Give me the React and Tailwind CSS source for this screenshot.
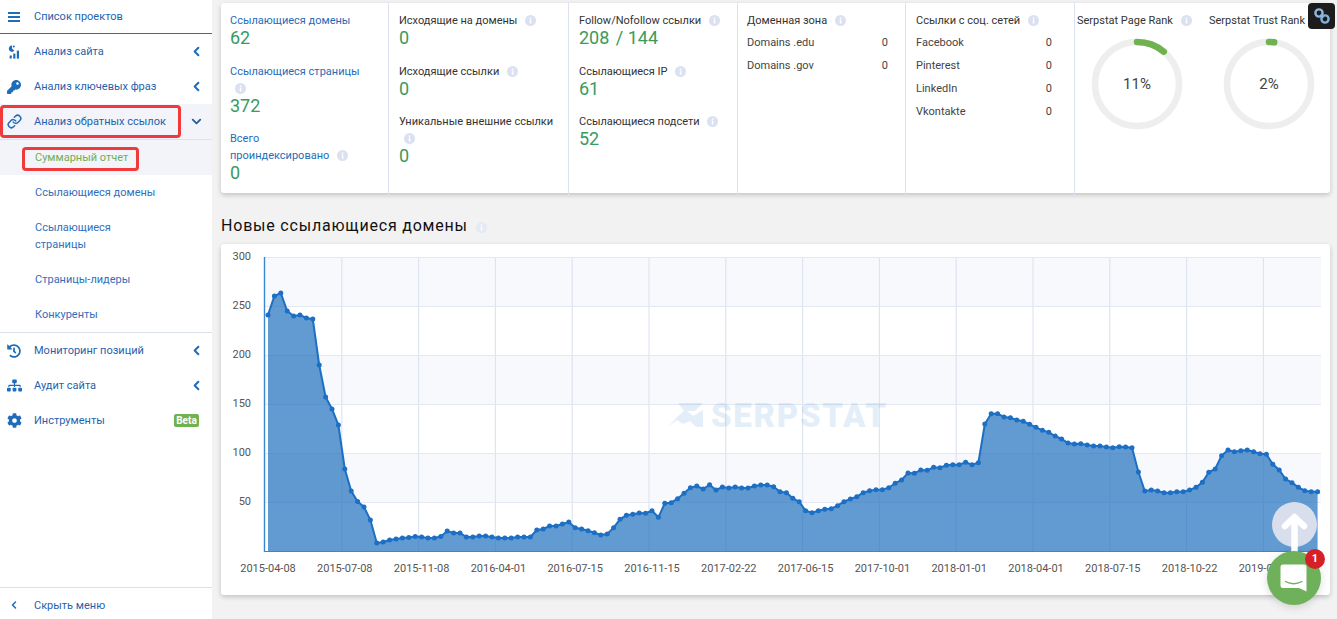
import React from "react";
import { ChevronLeft, ChevronDown, Link as LinkIcon } from "lucide-react";
import { FaKey, FaHistory, FaSitemap, FaCog } from "react-icons/fa";

const ys = [315,296,293,311,316,315,318,319,365,397,409,425,469,491,501.5,507,520,543,542,540,539,538,537.5,536.5,537,538,538,536.5,531,533,533,537,537,536,536,537,538,538,538,537,537,537,530,529,526,526,524,522,527.7,529,530.7,532.7,535,534,527.7,519.3,515.3,514.3,513,513.3,510.7,517.3,503.3,502.7,498.7,493.3,487.7,486,489,484.7,490,487,488,487,488,488,486,485,485,486.7,491.7,492.7,498.3,501.7,510.7,512.7,510.7,509.3,508.7,505.7,501.7,499,496.7,492.7,490.7,489.7,489.7,487.7,483.3,480,473,473.3,470,470.3,467.3,467.7,465.3,464.7,464.7,462.3,464.7,462.7,424,413.7,413.7,417,417.7,420,421.3,424.3,427.3,430.3,432.3,436,439,443,444,443.7,445,446,446,447,447.7,446.7,447,447.7,472,491,490,491,492.7,492.7,491.7,491.7,490,487.3,482.3,472.3,469,455.7,450,451.7,450.7,450,451.7,453.7,454.3,464.3,470,479,482.7,487.3,490.7,491.7,491.7];
const pts = ys.map((y, i) => [268 + i * 6.4, y]);
const line = pts.map((p) => p.join(",")).join(" ");
const area = `268,551 ${line} ${pts[pts.length - 1][0]},551`;
const xLabels = ["2015-04-08","2015-07-08","2015-11-08","2016-04-01","2016-07-15","2016-11-15","2017-02-22","2017-06-15","2017-10-01","2018-01-01","2018-04-01","2018-07-15","2018-10-22","2019-02-15"];

function Info({ light }) {
  return (
    <svg viewBox="0 0 11 11" className="inline-block w-[11px] h-[11px] ml-[5px] align-[-2px]">
      <circle cx="5.5" cy="5.5" r="5.5" fill={light ? "#e6e9f4" : "#dbe1f0"} />
      <rect x="4.8" y="4.6" width="1.5" height="4" fill="#fff" />
      <rect x="4.8" y="2.4" width="1.5" height="1.5" fill="#fff" />
    </svg>
  );
}

function SiteIcon() {
  return (
    <svg viewBox="0 0 14 14" className="w-[14px] h-[14px]" fill="#1f6cb8">
      <path d="M5 0.5a3.2 3.2 0 1 0 2.4 5.3L5 3.6z" />
      <rect x="5.8" y="0.4" width="2" height="2" rx="1" />
      <rect x="2.6" y="10.5" width="2.2" height="3" />
      <rect x="6.2" y="8.6" width="2.2" height="5" />
      <rect x="9.8" y="5.6" width="2.2" height="8" />
    </svg>
  );
}

function NavRow({ icon, label, right, className = "", children }) {
  return (
    <div className={`relative flex items-center h-[35px] pl-[6px] pr-[10px] shrink-0 ${className}`}>
      <span className="w-[16px] flex justify-center mr-[12px] text-[#1f6cb8]">{icon}</span>
      <span className="text-[11px] leading-[17px] text-[#1f62ad] whitespace-nowrap">{label}</span>
      <span className="ml-auto flex items-center">{right}</span>
      {children}
    </div>
  );
}

const Back = () => <ChevronLeft size={15} strokeWidth={3.2} className="text-[#1f6cb8] -mr-[2px]" />;

function SubRow({ children, active }) {
  return (
    <div className={`relative flex items-center min-h-[35px] py-[9px] pl-[35px] pr-[50px] shrink-0 text-[11px] leading-[17px] ${active ? "bg-[#f3f4f9] text-[#6fae55]" : "text-[#2f6fbd]"}`}>
      <span>{children}</span>
      {active && <span className="absolute left-[22px] top-[7px] w-[117px] h-[24px] border-[3px] border-[#f03a3a] rounded-[4px]" />}
    </div>
  );
}

function Stat({ label, value, blue, info, narrow, children }) {
  return (
    <div className="mb-[16px] first:mb-[17px]">
      <div className={`text-[11px] leading-[17px] ${blue ? "text-[#1f6cb8]" : "text-[#333]"} ${narrow ? "max-w-[130px]" : ""}`}>
        {label}
        {info && <> <Info /></>}
      </div>
      <div className="text-[18px] leading-[17px] text-[#3a9a5c]">{value ?? children}</div>
    </div>
  );
}

function Col({ children, className = "" }) {
  return <div className={`border-r border-[#dde2f0] pt-[9px] ${className}`}>{children}</div>;
}

function KV({ k, v }) {
  return (
    <div className="flex justify-between text-[11px] leading-[17px] h-[23px] text-[#444]">
      <span>{k}</span>
      <span>{v}</span>
    </div>
  );
}

function Ring({ pct, title, info }) {
  const c = 2 * Math.PI * 42;
  return (
    <div className="w-[120px]">
      <div className="text-[11px] leading-[17px] text-[#333] whitespace-nowrap">
        {title}
        {info && <> <Info /></>}
      </div>
      <div className="relative w-[92px] h-[92px] mx-auto mt-[9px]">
        <svg viewBox="0 0 92 92" className="w-[92px] h-[92px]">
          <circle cx="46" cy="46" r="42" fill="none" stroke="#eeeeee" strokeWidth="6.5" />
          <circle cx="46" cy="46" r="42" fill="none" stroke="#6fb24f" strokeWidth="6.5" strokeLinecap="round" strokeDasharray={`${(c * pct) / 100} ${c}`} transform="rotate(-90 46 46)" />
        </svg>
        <div className="absolute inset-0 flex items-center justify-center text-[15px] text-[#444]">{pct}%</div>
      </div>
    </div>
  );
}

function Chart() {
  const vx = Array.from({ length: 13 }, (_, i) => 341.8 + i * 76.8);
  const hy = [257.5, 306.5, 355.5, 404.5, 453.5, 502.5];
  return (
    <svg viewBox="221 244 1109 351" className="w-[1109px] h-[351px] block">
      <rect x="265" y="257.5" width="1056" height="49" fill="#f8f9fc" />
      <rect x="265" y="355.5" width="1056" height="49" fill="#f8f9fc" />
      <rect x="265" y="453.5" width="1056" height="49" fill="#f8f9fc" />
      {vx.map((x) => <line key={x} x1={x} x2={x} y1="257" y2="551" stroke="#dfe4f1" strokeWidth="1.2" />)}
      {hy.map((y) => <line key={y} x1="265" x2="1321" y1={y} y2={y} stroke="#e4e8f3" strokeWidth="1.2" />)}
      <g fill="#3184cf" opacity="0.13">
        <polygon points="678,403 703,403 695,411 687,411 693,416 703,410 703,427 696,427 690,421 683,424 677,420 668,427 668,427 678,416 684,411" />
        <text x="711" y="427" fontFamily="Roboto, sans-serif" fontWeight="900" fontSize="33" letterSpacing="1.7">SERPSTAT</text>
      </g>
      <polygon points={area} fill="#1e70bd" fillOpacity="0.7" />
      <polyline points={line} fill="none" stroke="#1c6fc4" strokeWidth="2" />
      {pts.map(([x, y]) => <circle key={x} cx={x} cy={y} r="2.5" fill="#1c6fc4" />)}
      <line x1="264.5" x2="264.5" y1="257" y2="552" stroke="#3a87d0" strokeWidth="1.4" />
      <line x1="264" x2="1321" y1="551.5" y2="551.5" stroke="#3a87d0" strokeWidth="1.2" />
      {[300, 250, 200, 150, 100, 50].map((v, i) => (
        <text key={v} x="251" y={260 + i * 49} textAnchor="end" fontFamily="Roboto, sans-serif" fontSize="11" fill="#555">{v}</text>
      ))}
      {xLabels.map((t, i) => (
        <text key={t} x={268 + i * 76.8} y="572" textAnchor="middle" fontFamily="Roboto, sans-serif" fontSize="11" fill="#555">{t}</text>
      ))}
    </svg>
  );
}

export default function App() {
  return (
    <div className="relative flex w-full h-screen overflow-hidden bg-[#f2f2f2] font-['Roboto',sans-serif]">
      <aside className="w-[212px] shrink-0 h-full bg-white flex flex-col">
        <div className="flex items-center h-[34px] border-b border-[#2a6db0] pl-[6px] shrink-0">
          <span className="w-[16px] ml-[2px] mr-[10px] flex flex-col gap-[2px]">
            <span className="block h-[2px] w-[12px] bg-[#1f6cb8]" />
            <span className="block h-[2px] w-[12px] bg-[#1f6cb8]" />
            <span className="block h-[2px] w-[12px] bg-[#1f6cb8]" />
          </span>
          <span className="text-[11px] leading-[17px] text-[#1f62ad]">Список проектов</span>
        </div>
        <NavRow icon={<SiteIcon />} label="Анализ сайта" right={<Back />} />
        <NavRow icon={<FaKey size={14} />} label="Анализ ключевых фраз" right={<Back />} />
        <NavRow
          icon={<LinkIcon size={15} strokeWidth={2.4} />}
          label="Анализ обратных ссылок"
          right={<ChevronDown size={15} strokeWidth={3} className="text-[#2a5e9c] -mr-[2px]" />}
          className="bg-[#f3f4f9]"
        >
          <span className="absolute left-0 top-[1px] w-[181px] h-[33px] border-[3px] border-[#f03a3a] rounded-[4px]" />
        </NavRow>
        <div className="h-px bg-[#dde1ef] shrink-0" />
        <SubRow active>Суммарный отчет</SubRow>
        <SubRow>Ссылающиеся домены</SubRow>
        <SubRow>Ссылающиеся страницы</SubRow>
        <SubRow>Страницы-лидеры</SubRow>
        <SubRow>Конкуренты</SubRow>
        <div className="h-px bg-[#dde1ef] shrink-0" />
        <NavRow icon={<FaHistory size={14} />} label="Мониторинг позиций" right={<Back />} />
        <NavRow icon={<FaSitemap size={15} />} label="Аудит сайта" right={<Back />} />
        <NavRow
          icon={<FaCog size={15} />}
          label="Инструменты"
          right={<span className="w-[25px] h-[13px] bg-[#6fb24f] rounded-[2px] text-white text-[10px] leading-[13px] font-bold text-center mr-[3px]">Beta</span>}
        />
        <div className="mt-auto h-[32px] border-t border-[#dde1ef] pt-[3px] flex items-center pl-[6px] shrink-0">
          <span className="w-[16px] flex justify-center mr-[12px]">
            <ChevronLeft size={12} strokeWidth={3} className="text-[#1f6cb8]" />
          </span>
          <span className="text-[11px] leading-[17px] text-[#1f62ad]">Скрыть меню</span>
        </div>
      </aside>

      <main className="w-[1109px] ml-[9px] pt-[3px] shrink-0">
        <section className="grid grid-cols-[168px_180px_169px_168px_169px_1fr] h-[190px] bg-white rounded-[3px] shadow-[0_2px_5px_rgba(0,0,0,0.2)]">
          <Col className="pl-[9px]">
            <Stat blue label="Ссылающиеся домены" value="62" />
            <Stat blue info narrow label="Ссылающиеся страницы" value="372" />
            <Stat blue info narrow label="Всего проиндексировано" value="0" />
          </Col>
          <Col className="px-[10px]">
            <Stat info label="Исходящие на домены" value="0" />
            <Stat info label="Исходящие ссылки" value="0" />
            <Stat info label="Уникальные внешние ссылки" value="0" />
          </Col>
          <Col className="px-[10px]">
            <Stat info label="Follow/Nofollow ссылки">208 <span className="ml-[2px]">/ 144</span></Stat>
            <Stat info label="Ссылающиеся IP" value="61" />
            <Stat info label="Ссылающиеся подсети" value="52" />
          </Col>
          <Col className="pl-[9px] pr-[17px]">
            <div className="text-[11px] leading-[17px] text-[#333] mb-[5px]">Доменная зона <Info /></div>
            <KV k="Domains .edu" v="0" />
            <KV k="Domains .gov" v="0" />
          </Col>
          <Col className="pl-[10px] pr-[22px]">
            <div className="text-[11px] leading-[17px] text-[#333] mb-[5px] whitespace-nowrap">Ссылки с соц. сетей <Info /></div>
            <KV k="Facebook" v="0" />
            <KV k="Pinterest" v="0" />
            <KV k="LinkedIn" v="0" />
            <KV k="Vkontakte" v="0" />
          </Col>
          <div className="pl-[2px] pt-[9px] flex gap-[12px]">
            <Ring pct={11} title="Serpstat Page Rank" info />
            <Ring pct={2} title="Serpstat Trust Rank" />
          </div>
        </section>

        <h2 className="mt-[21px] h-[24px] flex items-center text-[16px] font-normal tracking-[0.8px] text-[#111]">
          Новые ссылающиеся домены
          <span className="ml-[3px]"><Info light /></span>
        </h2>

        <section className="mt-[6px] h-[351px] bg-white rounded-[3px] shadow-[0_2px_5px_rgba(0,0,0,0.2)] overflow-hidden">
          <Chart />
        </section>
      </main>

      <div className="absolute left-[1308px] top-[3px] w-[27px] h-[26px] rounded-[4px] bg-[#1c1c1e] flex items-center justify-center">
        <svg viewBox="0 0 18 18" className="w-[18px] h-[18px]" fill="none" strokeWidth="2.4">
          <circle cx="6" cy="6" r="3.6" stroke="#8fb4d9" />
          <circle cx="12" cy="12" r="3.6" stroke="#7fb0d8" />
          <line x1="7.5" y1="7.5" x2="10.5" y2="10.5" stroke="#8fb4d9" />
        </svg>
      </div>

      <div className="absolute left-[1272px] top-[502px] w-[45px] h-[45px] rounded-full bg-[#d9deed] flex justify-center overflow-visible">
        <svg viewBox="0 0 45 55" className="w-[45px] h-[55px] shrink-0 overflow-visible">
          <path d="M22.5 17 V55 M13 24 L22.5 15 L32 24" fill="none" stroke="#fff" strokeWidth="6.5" strokeLinecap="round" strokeLinejoin="round" />
        </svg>
      </div>

      <div className="absolute left-[1267px] top-[551px] w-[54px] h-[54px] rounded-full bg-[#6fb05a] shadow-[0_2px_8px_rgba(0,0,0,0.15)] flex items-center justify-center">
        <svg viewBox="0 0 28 30" className="w-[28px] h-[30px]">
          <path d="M3 1.5 H24 a2.5 2.5 0 0 1 2.5 2.5 V28.5 L19 25 H3 a2.5 2.5 0 0 1 -2.5 -2.5 V4 A2.5 2.5 0 0 1 3 1.5z" fill="#fff" />
          <path d="M5.5 18.5 Q13.5 23 22 18.5" fill="none" stroke="#6fb05a" strokeWidth="1.4" strokeLinecap="round" />
        </svg>
      </div>
      <div className="absolute left-[1305px] top-[549px] w-[20px] h-[20px] rounded-full bg-[#d62027] text-white text-[11px] leading-[20px] font-bold text-center">1</div>
    </div>
  );
}
